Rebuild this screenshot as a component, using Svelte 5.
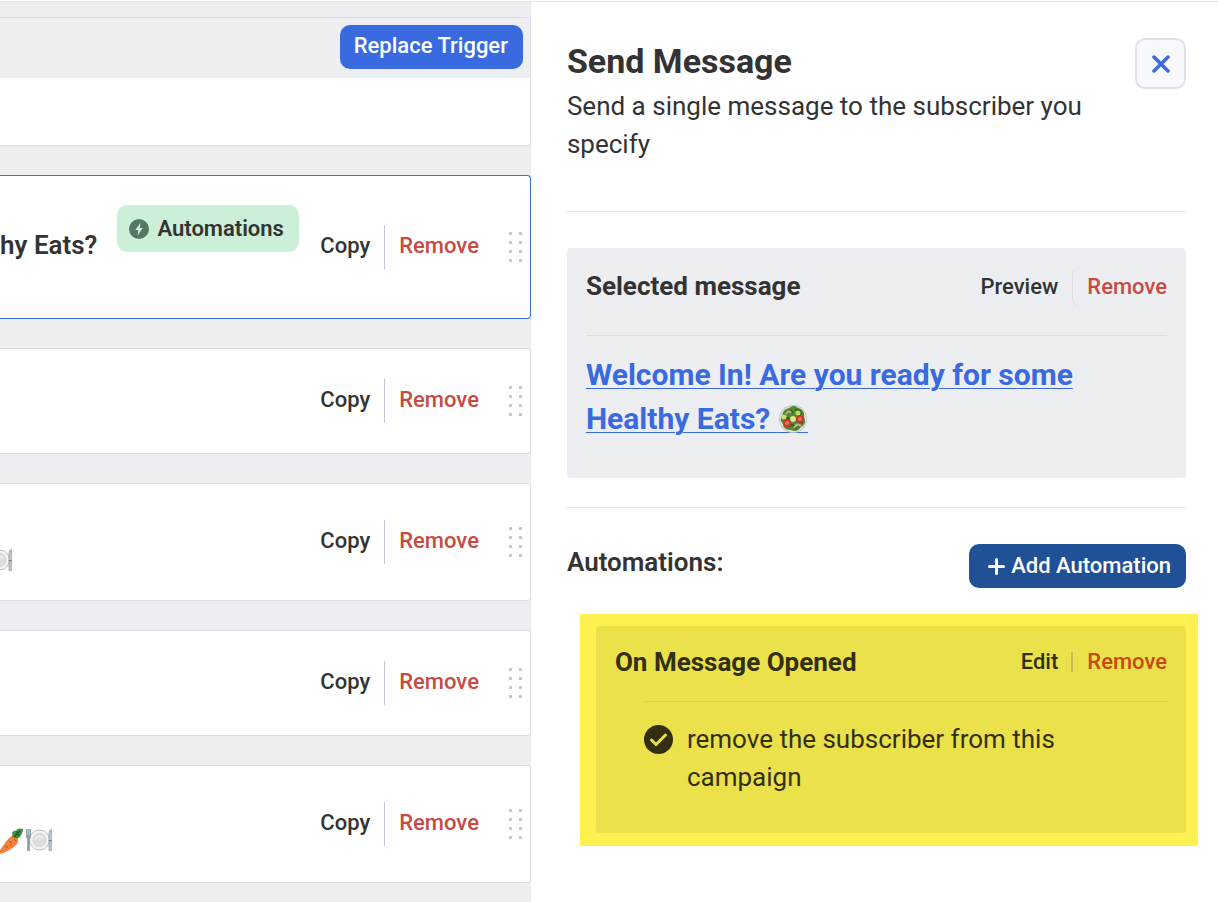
<script>
	// Emojis that close each step's name on the left
	const steps = [
		{ id: 1, plate: false, carrot: false, cut: false },
		{ id: 2, plate: true, carrot: false, cut: true },
		{ id: 3, plate: false, carrot: false, cut: false },
		{ id: 4, plate: true, carrot: true, cut: false }
	];
</script>

{#snippet actions()}
	<div class="actions">
		<button class="text-btn">Copy</button>
		<button class="text-btn danger split">Remove</button>
		<svg class="grip" width="14" height="30" viewBox="0 0 14 30" fill="#c3c6d6">
			{#each [0, 9, 18, 27] as y}
				<rect x="0" {y} width="3" height="3" rx=".5" />
				<rect x="10" {y} width="3" height="3" rx=".5" />
			{/each}
		</svg>
	</div>
{/snippet}

<main>
	<section class="flow">
		<div class="card trigger">
			<header>
				<button class="primary">Replace Trigger</button>
			</header>
			<div class="trigger-body"></div>
		</div>

		<div class="card active">
			<h2>hy Eats?</h2>
			<span class="badge">
				<svg width="20" height="20" viewBox="0 0 20 20">
					<circle cx="10" cy="10" r="10" fill="#577860" />
					<path d="M11.5 3.8 L6.3 11 H9.3 L8.6 16.4 L13.8 8.9 H10.8 Z" fill="#ccefd8" />
				</svg>
				Automations
			</span>
			{@render actions()}
		</div>

		{#each steps as step (step.id)}
			<div class="card" class:tall={step.plate}>
				<div class="emojis">
					{#if step.carrot}
						<svg width="23" height="26" viewBox="0 0 23 26">
							<path d="M12 8 C9 9 5 15 0 22 V26 C6 24 15 20 18 14 C19 10 15 7 12 8Z" fill="#ef8138" />
							<path d="M9 13 l3 2 M5 18 l3 1.5 M12 18 l-2 -1.500 M14 11 l2 2" stroke="#c9571f" stroke-width="1" />
							<path d="M13 9 C11 5 13 2 16 3 C17 0 21 0 23 1 C23 4 22 6 21 7 C20 10 17 11 15 10Z" fill="#3f8f3a" />
							<path d="M14 9 L20 3 M16 7 h4 M17 6 v-3" stroke="#215f27" stroke-width="1.200" fill="none" />
						</svg>
					{/if}
					{#if step.plate}
						<svg width={step.cut ? 13 : 27} height="24" viewBox={step.cut ? '14 0 13 24' : '0 0 27 24'}>
							<circle cx="13.5" cy="12" r="10" fill="#f4f4f3" stroke="#b9bcbe" />
							<circle cx="13.500" cy="12" r="6.500" fill="#dedfde" stroke="#d2d4d5" />
							<path d="M9 12 a4.500 4.500 0 0 1 8 -2" stroke="#f4f4f3" fill="none" />
							<path d="M0 1 h5 v7 q0 2 -1.200 2.500 V23 h-2.600 V10.500 Q0 10 0 8Z" fill="#8e9ba8" />
							<path d="M1.700 1 v6 M3.400 1 v6" stroke="#dfe5e9" stroke-width=".7" />
							<path d="M22.500 23 V5 q.5 -4 3.500 -4 V23Z" fill="#a9b5c1" />
							<path d="M24.500 4 v8 M24.500 14 v8" stroke="#c3cdd7" />
							<path d="M22.500 12.500 h3.500" stroke="#76838f" />
						</svg>
					{/if}
				</div>
				{@render actions()}
			</div>
		{/each}
	</section>

	<aside>
		<header class="intro">
			<div>
				<h1>Send Message</h1>
				<p>Send a single message to the subscriber you specify</p>
			</div>
			<button class="close" aria-label="Close">
				<svg width="18" height="18" viewBox="0 0 18 18">
					<path d="M2 2 L16 16 M16 2 L2 16" stroke="#396ae0" stroke-width="3.500" stroke-linecap="round" />
				</svg>
			</button>
		</header>

		<section class="panel">
			<div class="panel-head">
				<h2>Selected message</h2>
				<button class="text-btn">Preview</button>
				<button class="text-btn danger split soft">Remove</button>
			</div>
			<p class="message">
				<a href="#message">Welcome In! Are you ready for some Healthy Eats?
					<svg width="30" height="30" viewBox="0 0 30 30">
						<rect y="27" width="30" height="1" fill="#396ae0" />
						<circle cx="15" cy="14" r="14" fill="#c3c6c3" />
						<circle cx="15" cy="14" r="13" fill="#e4e7df" />
						<path d="M4 11 Q5 4 11 3 Q16 -1 20 3 Q27 5 26 12 Q29 19 23 22 Q19 28 13 25 Q5 25 5 19 Q1 16 4 11Z" fill="#55892f" />
						<path d="M8 8 Q12 3 15 8 M17 5 Q23 4 23 10 M6 14 Q11 11 13 17 M17 14 Q21 19 25 17 M11 22 Q15 17 18 24" stroke="#2f6421" stroke-width="2" fill="none" />
						<path d="M8 9 q3 -5 5 -1 M16 23 q3 -6 7 -2" stroke="#c7a994" stroke-width="2" fill="none" />
						<circle cx="20" cy="8" r="2.500" fill="#bfdc69" />
						<circle cx="6" cy="12" r="2.500" fill="#c4df73" />
						<circle cx="15" cy="14" r="3" fill="#d5e985" />
						<circle cx="9" cy="18" r="4" fill="#c9382b" />
						<circle cx="22" cy="14" r="4" fill="#c9382b" />
						<circle cx="9" cy="18" r="2" fill="#e27561" />
						<circle cx="22" cy="14" r="2" fill="#e27561" />
					</svg></a>
			</p>
		</section>

		<section class="automations">
			<div class="auto-head">
				<h2>Automations:</h2>
				<button class="primary dark">
					<svg width="17" height="17" viewBox="0 0 17 17">
						<path d="M8.500 1.500 V15.500 M1.500 8.500 H15.500" stroke="#fff" stroke-width="3" stroke-linecap="round" />
					</svg>
					Add Automation
				</button>
			</div>

			<div class="highlight">
				<div class="rule">
					<div class="rule-head">
						<h2>On Message Opened</h2>
						<button class="text-btn">Edit</button>
						<span class="bar"></span>
						<button class="text-btn danger">Remove</button>
					</div>
					<div class="rule-body">
						<svg width="29" height="29" viewBox="0 0 29 29">
							<circle cx="14.500" cy="14.500" r="14.500" fill="#332f12" />
							<path d="M7.500 15 L12 19.500 L21.500 10" stroke="#ebe14b" stroke-width="3" stroke-linecap="round" stroke-linejoin="round" fill="none" />
						</svg>
						<p>remove the subscriber from this campaign</p>
					</div>
				</div>
			</div>
		</section>
	</aside>
</main>

<style>
	:global(body) {
		background: #fff;
		color: #333;
		font-family: Roboto, "Liberation Sans", sans-serif;
		font-size: 26px;
		line-height: 38px;
	}

	main {
		display: grid;
		grid-template-columns: minmax(0, 17fr) minmax(0, 22fr);
		min-height: 100vh;
		box-sizing: border-box;
		border-top: 1px solid #e1e1e6;
		margin-top: 1px;
	}

	h1, h2, p {
		margin: 0;
	}

	h1 {
		margin-bottom: 3px;
		font-size: 34px;
		line-height: 46px;
		font-weight: 700;
	}

	h2 {
		font-size: 26px;
		font-weight: 700;
	}

	button {
		border: 0;
		background: none;
		color: inherit;
		font: 500 22px/44px Roboto, "Liberation Sans", sans-serif;
		padding: 0;
		cursor: pointer;
		white-space: nowrap;
	}

	svg {
		flex: none;
	}

	/* Left side: the campaign flow */
	.flow {
		display: flex;
		flex-direction: column;
		gap: 29px;
		padding-top: 15px;
		background: #edeef2;
	}

	.card {
		display: flex;
		align-items: center;
		box-sizing: border-box;
		min-height: 106px;
		padding-right: 7px;
		background: #fff;
		border: 1px solid #dcdde3;
		border-left: 0;
		border-radius: 0 4px 4px 0;
	}

	.tall {
		min-height: 118px;
	}

	.active {
		min-height: 144px;
		border-color: #396ae0;
	}

	.active h2 {
		padding-bottom: 4px;
		font-weight: 600;
	}

	.trigger {
		display: block;
		padding: 0;
	}

	.trigger header {
		display: flex;
		justify-content: flex-end;
		padding: 7px 7px 9px;
		background: #edeef2;
	}

	.trigger-body {
		height: 67px;
	}

	.primary {
		display: flex;
		align-items: center;
		gap: 6px;
		height: 44px;
		padding: 0 15px 2px 14px;
		border-radius: 10px;
		background: #396ae0;
		color: #fff;
	}

	.dark {
		padding: 0 15px 0 19px;
		background: #205196;
	}

	.badge {
		display: flex;
		align-items: center;
		align-self: flex-start;
		gap: 8px;
		height: 47px;
		box-sizing: border-box;
		margin: 29px 0 0 20px;
		padding: 0 15px 0 12px;
		border-radius: 10px;
		background: #ccefd8;
		font-size: 22px;
		font-weight: 600;
	}

	.emojis {
		display: flex;
		align-self: flex-end;
		gap: 3px;
		padding-bottom: 28px;
	}

	.actions {
		display: flex;
		align-items: center;
		margin-left: auto;
	}

	.text-btn {
		line-height: 42px;
		padding-bottom: 2px;
	}

	.danger {
		color: #c74b42;
	}

	.split {
		margin-left: 14px;
		padding-left: 14px;
		border-left: 1px solid #c3c6d6;
	}

	.grip {
		margin-left: 30px;
	}

	/* Right side: settings of the chosen step */
	aside {
		padding: 36px 32px 36px 36px;
	}

	.intro {
		display: flex;
		justify-content: space-between;
		align-items: flex-start;
		gap: 36px;
		padding-bottom: 48px;
		border-bottom: 1px solid #e1e1e6;
	}

	.close {
		display: grid;
		place-items: center;
		flex: none;
		width: 51px;
		height: 51px;
		border: 2px solid #e0e1ea;
		border-radius: 10px;
		background: #f8f9fd;
	}

	.panel {
		margin: 36px 0 29px;
		padding: 18px 19px 37px;
		border-radius: 4px;
		background: #edeef2;
	}

	.panel-head {
		display: flex;
		align-items: center;
		padding-bottom: 27px;
		border-bottom: 1px solid #dcdde3;
	}

	.panel-head h2,
	.rule-head h2 {
		margin-right: auto;
	}

	.panel-head .text-btn {
		padding-bottom: 0;
	}

	.panel-head h2 {
		padding-bottom: 2px;
	}

	.soft {
		border-color: #dcdde3;
		border-radius: 10px;
	}

	.message {
		padding-top: 17px;
		font-size: 30px;
		line-height: 44px;
		font-weight: 700;
	}

	.message a {
		color: #396ae0;
		text-decoration-thickness: 1px;
		text-underline-offset: 3px;
	}

	.message svg {
		vertical-align: -6px;
	}

	.automations {
		padding-top: 36px;
		border-top: 1px solid #e1e1e6;
	}

	.auto-head {
		display: flex;
		justify-content: space-between;
	}

	.auto-head h2 {
		line-height: 36px;
		font-weight: 600;
	}

	/* The marked box reaches past the column on the right */
	.highlight {
		margin: 26px -12px 0 13px;
		padding: 12px 12px 13px 16px;
		background: #fef150;
	}

	.rule {
		padding: 16px 19px 37px;
		border-radius: 4px;
		background: #ebe14b;
		color: #332f12;
	}

	.rule-head {
		display: flex;
		align-items: center;
	}

	.rule .text-btn {
		line-height: 40px;
		padding: 0;
	}

	.rule .danger {
		color: #c64a14;
	}

	.bar {
		width: 2px;
		height: 20px;
		margin: 0 14px 0 13px;
		background: #c3bb4b;
	}

	.rule-body {
		display: flex;
		gap: 14px;
		margin-left: 29px;
		margin-top: 19px;
		padding-top: 18px;
		border-top: 1px solid #d9cf48;
	}

	.rule-body svg {
		margin-top: 5px;
	}
</style>
